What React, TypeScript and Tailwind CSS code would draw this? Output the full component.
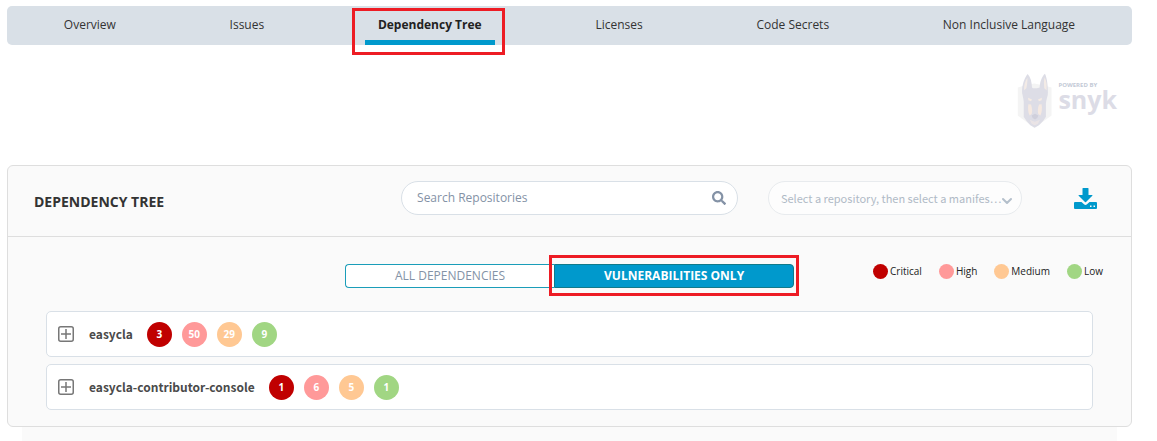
import { useState } from 'react';
import { FaSearch } from 'react-icons/fa';
import { ChevronDown } from 'lucide-react';

interface Repository {
  name: string;
  counts: number[];
}

const tabs = ['Overview', 'Issues', 'Dependency Tree', 'Licenses', 'Code Secrets', 'Non Inclusive Language'];

const severities = [
  { label: 'Critical', color: 'bg-[#c00000]' },
  { label: 'High', color: 'bg-[#ff9999]' },
  { label: 'Medium', color: 'bg-[#ffc893]' },
  { label: 'Low', color: 'bg-[#a1d683]' },
];

const repositories: Repository[] = [
  { name: 'easycla', counts: [3, 50, 29, 9] },
  { name: 'easycla-contributor-console', counts: [1, 6, 5, 1] },
];

// Red outline drawn around a highlighted control
function Callout({ className }: { className: string }) {
  return <span aria-hidden="true" className={`pointer-events-none absolute z-10 border-3 border-[#ed1c24] ${className}`} />;
}

function SnykDog() {
  return (
    <svg viewBox="38 24 105 166" className="h-[55px] w-[35px]" aria-hidden="true">
      <path d="M40 68 L60 62 L90 56 L120 62 L142 68 V152 L90 189 L40 152 Z" fill="#f4f4f4" />
      <path d="M70 27 C60 38 52 62 53 84 C56 98 59 106 58 120 L58 156 L66 168 L78 182 L91 189 L104 182 L117 168 L125 156 L125 120 C125 104 131 96 131 82 C131 58 128 38 122 26 C113 34 107 50 106 68 L98 70 H86 L83 68 C82 50 79 37 70 27 Z" fill="#dddde6" />
      <path d="M69 38 C62 48 58 62 59 76 L66 70 C68 58 70 48 69 38 Z" fill="#f3ebe6" />
      <path d="M121 37 C127 48 128 62 127 76 L120 70 C119 58 118 48 121 37 Z" fill="#f3ebe6" />
      <path d="M71 99 L83 104 L80 109 L72 106 Z M113 99 L101 104 L104 109 L112 106 Z" fill="#f5ebe4" />
      <path d="M72 118 L80 119 C84 130 84 141 82 148 L76 152 C71 144 70 130 72 118 Z M112 118 L104 119 C100 130 100 141 102 148 L108 152 C113 144 114 130 112 118 Z" fill="#f5e9e1" />
      <path d="M82 152 L92 147 L102 152 L99 160 L92 164 L85 160 Z" fill="#cfcfdb" />
      <path d="M76 165 L91 171 L107 165 L101 177 L91 182 L82 177 Z" fill="#eae4e6" />
    </svg>
  );
}

function DownloadIcon() {
  return (
    <svg viewBox="0 0 23 21" className="h-[21px] w-[23px]" fill="#0099cc" aria-hidden="true">
      <path d="M9 0H14Q14.500 0 14.500 .5V7H18Q19 7 18.300 7.800L12 14Q11.500 14.500 11 14L4.700 7.800Q4 7 5 7H8.500V.5Q8.500 0 9 0Z" />
      <path
        fillRule="evenodd"
        d="M1 14H7.500L10 16.300Q11.500 17.500 13 16.300L15.500 14H22Q23 14 23 15V20Q23 21 22 21H1Q0 21 0 20V15Q0 14 1 14ZM16 17.500V19H17.500V17.500ZM19.500 17.500V19H21V17.500Z"
      />
    </svg>
  );
}

function ExpandIcon() {
  return (
    <svg viewBox="0 0 16 16" className="size-4" fill="none" stroke="#777" aria-hidden="true">
      <rect x="0.75" y="0.75" width="14.5" height="14.5" rx="2" strokeWidth="1.5" />
      <path d="M8 3v10M3 8h10" strokeWidth="1.5" />
    </svg>
  );
}

export default function App() {
  const [activeTab, setActiveTab] = useState('Dependency Tree');
  const [vulnerableOnly, setVulnerableOnly] = useState(true);
  const [search, setSearch] = useState('');

  const visible = repositories.filter((repo) => repo.name.includes(search.toLowerCase()));

  return (
    <div className="bg-white pt-1.5 pr-[25px] pl-[7px] font-['Open_Sans',sans-serif] text-[#333]">
      {/* Tabs */}
      <nav className="flex h-[39px] justify-around rounded-[5px] bg-[#d9e0e7]">
        {tabs.map((tab) => (
          <button
            key={tab}
            onClick={() => setActiveTab(tab)}
            className={`relative px-[13px] pb-0.5 text-xs whitespace-nowrap ${activeTab === tab ? 'font-bold text-[#222]' : ''}`}
          >
            {tab}
            {activeTab === tab && <span className="absolute inset-x-0 bottom-0 h-[5px] bg-[#0099cc]" />}
            {tab === 'Dependency Tree' && <Callout className="top-0.5 -right-2.5 -bottom-2.5 -left-[13px]" />}
          </button>
        ))}
      </nav>

      {/* Powered by */}
      <div className="mt-7 mr-[15px] mb-[37px] flex justify-end gap-1.5">
        <SnykDog />
        <div className="pt-2 font-bold">
          <div className="text-[6px] leading-2 text-[#c3cad6]">POWERED BY</div>
          <div className="text-[25px] leading-5 text-[#dcdce6]">snyk</div>
        </div>
      </div>

      {/* Dependency panel */}
      <main className="rounded-md border border-[#dedede] bg-[#fafafa]">
        <header className="flex items-center border-b border-[#dedede] pt-[15px] pb-[21px]">
          <h1 className="w-[35%] pt-2 pl-[26px] text-sm font-bold">DEPENDENCY TREE</h1>
          <div className="flex h-[34px] w-[30%] items-center rounded-full border border-[#d9e0e7] bg-white pr-[11px] pl-[15px]">
            <input
              type="text"
              aria-label="Search Repositories"
              placeholder="Search Repositories"
              value={search}
              onChange={(e) => setSearch(e.target.value)}
              className="min-w-0 flex-1 text-xs outline-none placeholder:text-[#8492a6]"
            />
            <FaSearch size={14} className="text-[#8492a6]" />
          </div>
          <div className="relative ml-[30px] flex h-[34px] w-[254px] items-center">
            <select
              aria-label="Manifest"
              className="h-full w-full appearance-none rounded-full border border-[#e8ebee] bg-[#fdfdfd] pr-4 pl-3 font-['Noto_Sans_CJK_SC',sans-serif] text-[11px] text-[#b0bac6]"
            >
              <option>Select a repository, then select a manifes…</option>
            </select>
            <ChevronDown size={16} strokeWidth={3} className="pointer-events-none absolute right-[7px] bottom-1.5 text-[#b4bfcb]" />
          </div>
          <button aria-label="Download" className="mr-[34px] ml-auto">
            <DownloadIcon />
          </button>
        </header>

        <div className="flex items-start pt-[27px]">
          <div className="ml-[30%] flex h-6 w-[40%] text-xs">
            <button
              onClick={() => setVulnerableOnly(false)}
              className="flex-[210] rounded-l-sm border border-r-0 border-[#1a9db9] bg-white text-[#8492a6]"
            >
              ALL DEPENDENCIES
            </button>
            <button
              onClick={() => setVulnerableOnly(true)}
              aria-pressed={vulnerableOnly}
              className="relative flex-[240] rounded-r-sm border border-[#117a8b] bg-[#0099cc] font-bold text-white"
            >
              VULNERABILITIES ONLY
              <Callout className="-inset-x-1.5 -top-2.5 -bottom-[9px]" />
            </button>
          </div>
          <ul className="mr-7 ml-auto flex gap-[17px] text-[10px] leading-[15px] text-[#222]">
            {severities.map((severity) => (
              <li key={severity.label} className="flex items-center gap-0.5">
                <span className={`size-[15px] rounded-full ${severity.color}`} />
                {severity.label}
              </li>
            ))}
          </ul>
        </div>

        {/* Repositories */}
        <ul className="flex flex-col gap-[7px] px-[38px] pt-[23px] pb-4">
          {visible.map((repo) => (
            <li key={repo.name} className="flex h-[46px] items-center rounded-[5px] border border-[#d9e0e7] bg-white pl-[11px]">
              <button aria-label={`Expand ${repo.name}`}>
                <ExpandIcon />
              </button>
              <span className="mr-3.5 ml-[15px] font-['Noto_Sans_CJK_SC',sans-serif] text-xs font-bold text-[#4a4a4a]">
                {repo.name}
              </span>
              <span className="flex gap-2.5">
                {repo.counts.map((count, i) => (
                  <span
                    key={severities[i].label}
                    className={`flex size-[25px] items-center justify-center rounded-full text-[10px] font-bold text-white ${severities[i].color}`}
                  >
                    {count}
                  </span>
                ))}
              </span>
            </li>
          ))}
        </ul>
      </main>
      <div className="mx-[15px] h-3.5 bg-[#fafafa]" />
    </div>
  );
}
